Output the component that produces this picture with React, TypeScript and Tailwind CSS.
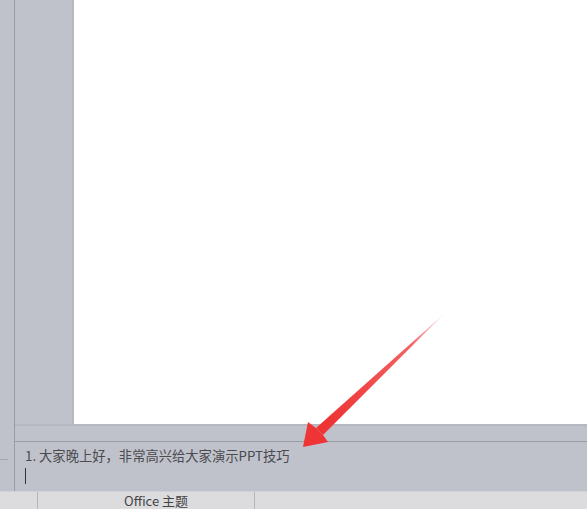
import React from 'react'

const font = { fontFamily: '"Microsoft YaHei", "Noto Sans CJK SC", "Liberation Sans", sans-serif' }

function Arrow() {
  return (
    <svg
      className="absolute left-0 top-0 pointer-events-none"
      width="587"
      height="509"
      viewBox="0 0 587 509"
    >
      <defs>
        <linearGradient id="tail" x1="445" y1="313" x2="330" y2="420" gradientUnits="userSpaceOnUse">
          <stop offset="0" stopColor="#f04a4a" stopOpacity="0.1" />
          <stop offset="0.3" stopColor="#f03c3c" stopOpacity="0.8" />
          <stop offset="1" stopColor="#ee3434" />
        </linearGradient>
      </defs>
      <polygon points="445,313 323,435 316,428" fill="url(#tail)" />
      <polygon points="303,447 308,422 316,428 323,435 328,442" fill="#ee3434" />
    </svg>
  )
}

export default function App() {
  return (
    <div className="relative w-[587px] h-[509px] overflow-hidden bg-[#c0c2cb]" style={font}>
      <div className="flex h-[491px]">
        <div className="relative w-[15px] shrink-0 border-r border-[#9a9ca5] bg-[#c0c2cb]">
          <div className="absolute left-0 top-[459px] h-px w-[8px] bg-[#a3a5ad]" />
        </div>
        <div className="flex flex-1 flex-col">
          <div className="flex h-[441px] flex-col">
            <div className="flex h-[424px] pl-[57px]">
              <div className="w-[2px] bg-[#b6b8c0]" />
              <div className="flex-1 bg-white" />
            </div>
            <div className="h-[2px] bg-[#b6b8c0]" />
            <div className="flex-1 bg-[#c0c2cb]" />
          </div>
          <div className="h-px bg-[#9a9ca5]" />
          <div className="flex-1 bg-[#c0c2cb] pl-[10px] pt-[5px]">
            <div className="text-[13.3px] leading-[18px] text-[#4a4a4f]">1. 大家晚上好，非常高兴给大家演示PPT技巧</div>
            <div className="mt-[3px] h-[16px] w-px bg-[#333]" />
          </div>
        </div>
      </div>
      <div className="flex h-[18px] items-center border-t border-[#cfd0d5] bg-[#dcdcdf] text-[13px] text-[#444]">
        <div className="w-[38px] h-full border-r border-[#b5b6bb]" />
        <div className="flex h-full w-[217px] items-center justify-center border-r border-[#b5b6bb] pl-[20px]">
          Office 主题
        </div>
        <div className="flex-1" />
      </div>
      <Arrow />
    </div>
  )
}
